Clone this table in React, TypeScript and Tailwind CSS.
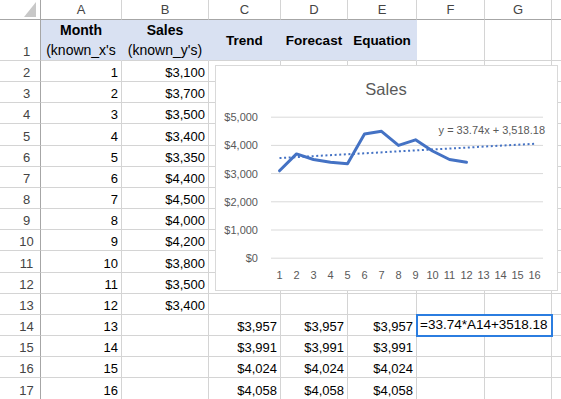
const cols = ['w-[81px]', 'w-[87px]', 'w-[72px]', 'w-[67px]', 'w-[69px]', 'w-[68px]', 'w-[67px]']
const letters = ['A', 'B', 'C', 'D', 'E', 'F', 'G']

const sales = [3100, 3700, 3500, 3400, 3350, 4400, 4500, 4000, 4200, 3800, 3500, 3400]
const forecast: Record<number, string> = { 13: '$3,957', 14: '$3,991', 15: '$4,024', 16: '$4,058' }

const fmt = (v: number) => '$' + v.toLocaleString('en-US')

function Cell({ w, children, className = '' }: { w: string; children?: React.ReactNode; className?: string }) {
  return (
    <div className={`${w} shrink-0 flex items-end justify-end pr-[3px] pb-px border-r border-b border-[#d4d4d4] text-black leading-[15px] ${className}`}>
      {children}
    </div>
  )
}

function RowHead({ n, className = '' }: { n: number; className?: string }) {
  return (
    <div className={`w-[41px] shrink-0 flex items-end justify-center pl-[13px] pb-px border-r border-r-[#a6a6a6] border-b border-b-[#d4d4d4] text-[#444] leading-[15px] ${className}`}>
      {n}
    </div>
  )
}

function Chart() {
  const W = 343
  const H = 226
  const x = (i: number) => 56 + 17 * (i - 0.5)
  const y = (v: number) => 193.2 - v * 0.0282
  const line = sales.map((v, i) => `${x(i + 1).toFixed(1)},${y(v).toFixed(1)}`).join(' ')
  const trend = (i: number) => 33.74 * i + 3518.18
  const ticks = [0, 1000, 2000, 3000, 4000, 5000]

  return (
    <div className="absolute left-[215px] top-[65px] w-[343px] h-[226px] bg-white border border-[#d9d9d9]">
      <svg width={W - 2} height={H - 2} viewBox={`1 1 ${W - 2} ${H - 2}`} fontFamily="'Liberation Sans', Arial, sans-serif">
        <text x={171} y={30} textAnchor="middle" fontSize={16.5} fill="#595959">Sales</text>
        {ticks.map((t) => (
          <g key={t}>
            <line x1={56} x2={328} y1={y(t)} y2={y(t)} stroke="#d9d9d9" strokeWidth={1} />
            <text x={43} y={y(t) + 4} textAnchor="end" fontSize={11} fill="#595959">
              {fmt(t)}
            </text>
          </g>
        ))}
        {Array.from({ length: 16 }, (_, i) => (
          <text key={i} x={x(i + 1)} y={214} textAnchor="middle" fontSize={11} fill="#595959">
            {i + 1}
          </text>
        ))}
        <line
          x1={x(1)}
          y1={y(trend(1))}
          x2={x(16)}
          y2={y(trend(16))}
          stroke="#4472c4"
          strokeWidth={2}
          strokeDasharray="2 2.6"
        />
        <polyline points={line} fill="none" stroke="#4472c4" strokeWidth={3} strokeLinejoin="round" strokeLinecap="round" />
        <text x={330} y={69} textAnchor="end" fontSize={11} fill="#595959">
          y = 33.74x + 3,518.18
        </text>
      </svg>
    </div>
  )
}

export default function App() {
  const rows = Array.from({ length: 16 }, (_, i) => i + 2)

  return (
    <div className="relative w-[561px] h-[399px] overflow-hidden bg-white text-[13px] font-['Liberation_Sans',Arial,sans-serif]">
      {/* column letters */}
      <div className="flex h-[20px]">
        <div className="w-[41px] shrink-0 border-r border-b border-[#a6a6a6] flex items-end justify-end pr-[4px] pb-[2px]">
          <svg width="12" height="15" viewBox="0 0 12 15">
            <polygon points="12,0 12,15 0,15" fill="#c8c8c8" />
          </svg>
        </div>
        {cols.map((w, i) => (
          <div key={w + i} className={`${w} shrink-0 border-r border-r-[#d4d4d4] border-b border-b-[#a6a6a6] flex items-center justify-center text-[#444]`}>
            {letters[i]}
          </div>
        ))}
        <div className="flex-1 border-b border-[#a6a6a6]" />
      </div>

      {/* row 1 headers */}
      <div className="flex h-[41px]">
        <RowHead n={1} className="pb-[2px]" />
        <div className="w-[81px] shrink-0 bg-[#d9e1f2] border-r border-r-[#d9e1f2] border-b border-b-[#d4d4d4] flex flex-col items-center justify-end leading-[20px] text-black overflow-hidden">
          <span className="font-bold text-[14px]">Month</span>
          <span className="text-[14px] whitespace-nowrap">(known_x's</span>
        </div>
        <div className="w-[87px] shrink-0 bg-[#d9e1f2] border-r border-r-[#d9e1f2] border-b border-b-[#d4d4d4] flex flex-col items-center justify-end leading-[20px] text-black">
          <span className="font-bold text-[14px]">Sales</span>
          <span className="text-[14px] whitespace-nowrap">(known_y's)</span>
        </div>
        {['Trend', 'Forecast', 'Equation'].map((t, i) => (
          <div
            key={t}
            className={`${cols[i + 2]} shrink-0 bg-[#d9e1f2] border-r border-r-[#d9e1f2] border-b border-b-[#d4d4d4] flex items-center justify-center font-bold text-[13.5px] text-black pt-[2px]`}
          >
            {t}
          </div>
        ))}
        <Cell w={cols[5]} />
        <Cell w={cols[6]} />
        <div className="flex-1 border-b border-[#d4d4d4]" />
      </div>

      {/* data rows */}
      {rows.map((r) => {
        const m = r - 1
        const v = sales[m - 1]
        const f = forecast[m]
        return (
          <div key={r} className="flex h-[21.17px]">
            <RowHead n={r} />
            <Cell w={cols[0]}>{m}</Cell>
            <Cell w={cols[1]}>{v ? fmt(v) : ''}</Cell>
            <Cell w={cols[2]}>{f}</Cell>
            <Cell w={cols[3]}>{f}</Cell>
            <Cell w={cols[4]}>{f}</Cell>
            {m === 13 ? (
              <div className="relative w-[135px] shrink-0 border-b border-[#d4d4d4]">
                <div className="absolute -left-px -top-px w-[137px] h-[23px] border-2 border-[#2b7de0] bg-white flex items-center pl-[2px] text-[13.5px] text-black whitespace-nowrap">
                  =33.74*A14+3518.18
                </div>
              </div>
            ) : (
              <>
                <Cell w={cols[5]} />
                <Cell w={cols[6]} />
              </>
            )}
            <div className="flex-1 border-b border-[#d4d4d4]" />
          </div>
        )
      })}

      <Chart />
    </div>
  )
}
